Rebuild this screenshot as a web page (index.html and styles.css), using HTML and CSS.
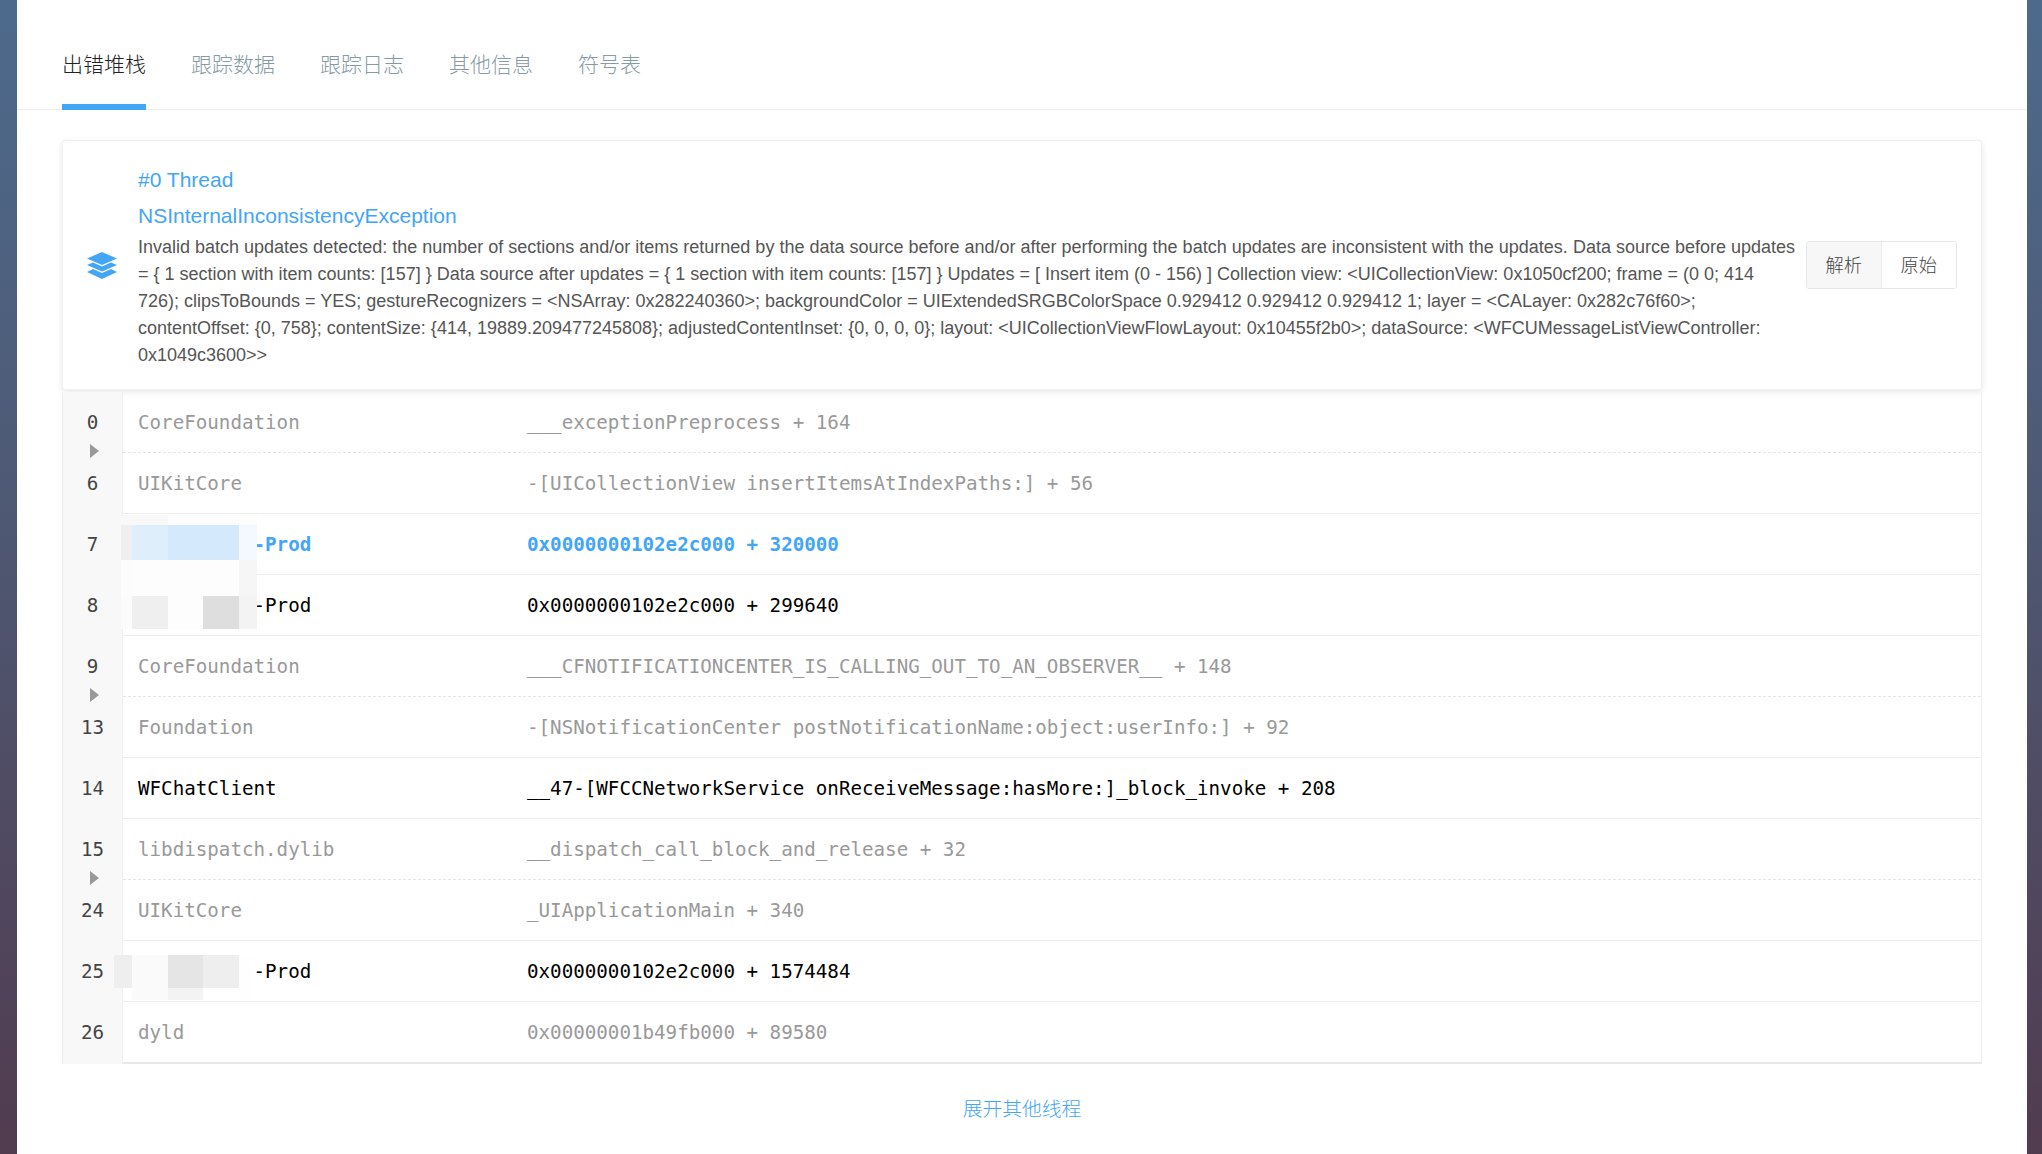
FILE: index.html
```html
<!DOCTYPE html>
<html lang="zh">
<head>
<meta charset="utf-8">
<title>出错堆栈</title>
<link rel="stylesheet" href="styles.css">
</head>
<body>
<main class="panel">
  <nav class="tabs">
    <a class="tab active">出错堆栈</a>
    <a class="tab">跟踪数据</a>
    <a class="tab">跟踪日志</a>
    <a class="tab">其他信息</a>
    <a class="tab">符号表</a>
  </nav>
  <section class="card">
    <svg class="layers" viewBox="0 0 30 27" width="30" height="27"><path d="M15 0L30 6.5L15 13L0 6.5Z"/><path d="M6 10.5L15 14.5L24 10.5L30 13L15 19.5L0 13Z"/><path d="M6 17L15 21L24 17L30 20L15 27L0 20Z"/></svg>
    <div class="summary">
      <div class="title">#0 Thread</div>
      <div class="title">NSInternalInconsistencyException</div>
      <p class="desc">Invalid batch updates detected: the number of sections and/or items returned by the data source before and/or after performing the batch updates are inconsistent with the updates. Data source before updates<br>= { 1 section with item counts: [157] } Data source after updates = { 1 section with item counts: [157] } Updates = [ Insert item (0 - 156) ] Collection view: &lt;UICollectionView: 0x1050cf200; frame = (0 0; 414<br>726); clipsToBounds = YES; gestureRecognizers = &lt;NSArray: 0x282240360&gt;; backgroundColor = UIExtendedSRGBColorSpace 0.929412 0.929412 0.929412 1; layer = &lt;CALayer: 0x282c76f60&gt;;<br>contentOffset: {0, 758}; contentSize: {414, 19889.209477245808}; adjustedContentInset: {0, 0, 0, 0}; layout: &lt;UICollectionViewFlowLayout: 0x10455f2b0&gt;; dataSource: &lt;WFCUMessageListViewController:<br>0x1049c3600&gt;&gt;</p>
    </div>
    <div class="switch">
      <button class="switch-btn on">解析</button>
      <button class="switch-btn">原始</button>
    </div>
  </section>
  <section class="stack">
    <div class="row dashed"><span class="num">0</span><span class="lib">CoreFoundation</span><span class="sym">___exceptionPreprocess + 164</span><i class="fold"></i></div>
    <div class="row"><span class="num">6</span><span class="lib">UIKitCore</span><span class="sym">-[UICollectionView insertItemsAtIndexPaths:] + 56</span></div>
    <div class="row hit">
      <span class="num">7</span><span class="lib"><span class="hidden-name"></span>-Prod</span><span class="sym">0x0000000102e2c000 + 320000</span>
      <svg class="mosaic mosaic-a" width="136" height="114" viewBox="121 515 136 114" shape-rendering="crispEdges">
        <rect x="121" y="515" width="47" height="10" fill="#f8f8f8"/><rect x="168" y="515" width="89" height="10" fill="#fdfdfd"/>
        <rect x="121" y="525" width="11" height="35" fill="#efefef"/><rect x="132" y="525" width="36" height="35" fill="#dfeefb"/><rect x="168" y="525" width="71" height="35" fill="#d4e9fb"/><rect x="239" y="525" width="18" height="35" fill="#f3f9fe"/>
        <rect x="121" y="560" width="11" height="36" fill="#fcfcfc"/><rect x="132" y="560" width="107" height="36" fill="#fdfdfd"/><rect x="239" y="560" width="18" height="36" fill="#f6f6f6"/>
        <rect x="121" y="596" width="11" height="33" fill="#fbfbfb"/><rect x="132" y="596" width="36" height="33" fill="#efefef"/><rect x="168" y="596" width="35" height="33" fill="#fdfdfd"/><rect x="203" y="596" width="36" height="33" fill="#dedede"/><rect x="239" y="596" width="18" height="33" fill="#f3f3f3"/>
      </svg>
    </div>
    <div class="row app"><span class="num">8</span><span class="lib"><span class="hidden-name"></span>-Prod</span><span class="sym">0x0000000102e2c000 + 299640</span></div>
    <div class="row dashed"><span class="num">9</span><span class="lib">CoreFoundation</span><span class="sym">___CFNOTIFICATIONCENTER_IS_CALLING_OUT_TO_AN_OBSERVER__ + 148</span><i class="fold"></i></div>
    <div class="row"><span class="num">13</span><span class="lib">Foundation</span><span class="sym">-[NSNotificationCenter postNotificationName:object:userInfo:] + 92</span></div>
    <div class="row app"><span class="num">14</span><span class="lib">WFChatClient</span><span class="sym">__47-[WFCCNetworkService onReceiveMessage:hasMore:]_block_invoke + 208</span></div>
    <div class="row dashed"><span class="num">15</span><span class="lib">libdispatch.dylib</span><span class="sym">__dispatch_call_block_and_release + 32</span><i class="fold"></i></div>
    <div class="row"><span class="num">24</span><span class="lib">UIKitCore</span><span class="sym">_UIApplicationMain + 340</span></div>
    <div class="row app">
      <span class="num">25</span><span class="lib"><span class="hidden-name"></span>-Prod</span><span class="sym">0x0000000102e2c000 + 1574484</span>
      <svg class="mosaic mosaic-b" width="139" height="45" viewBox="114 954 139 45" shape-rendering="crispEdges">
        <rect x="114" y="954" width="18" height="33" fill="#eeeeee"/><rect x="132" y="954" width="36" height="45" fill="#fafafa"/><rect x="168" y="954" width="35" height="33" fill="#e5e5e5"/><rect x="203" y="954" width="36" height="33" fill="#eeeeee"/><rect x="239" y="954" width="14" height="45" fill="#fefefe"/>
        <rect x="168" y="987" width="35" height="12" fill="#f3f3f3"/><rect x="203" y="987" width="36" height="12" fill="#ffffff"/>
      </svg>
    </div>
    <div class="row"><span class="num">26</span><span class="lib">dyld</span><span class="sym">0x00000001b49fb000 + 89580</span></div>
  </section>
  <a class="more">展开其他线程</a>
</main>
</body>
</html>
```

FILE: styles.css
```css
* { box-sizing: border-box; }

html, body { margin: 0; height: 100%; }

body {
  height: 1154px;
  overflow: hidden;
  background: linear-gradient(180deg, #4d6a8c 0%, #4e5873 45%, #513b4f 100%);
  font-family: "Liberation Sans", "Noto Sans CJK SC", sans-serif;
  color: #555;
}

.panel {
  margin: 0 15px 0 17px;
  height: 1154px;
  background: #fff;
}

.tabs {
  display: flex;
  gap: 45px;
  height: 110px;
  padding-left: 45px;
  border-bottom: 1px solid #eee;
}

.tab {
  height: 110px;
  padding-top: 47px;
  font-family: "Noto Sans CJK SC", sans-serif;
  font-size: 21px;
  font-weight: 300;
  line-height: 32px;
  color: #869aa4;
  border-bottom: 6px solid transparent;
}

.tab.active {
  color: #222;
  border-bottom-color: #42a5f5;
}

.card {
  display: flex;
  align-items: center;
  height: 250px;
  margin: 30px 45px 0;
  padding: 0 24px 0 24px;
  background: #fff;
  border: 1px solid #f0f0f0;
  border-radius: 3px;
  box-shadow: 0 2px 6px rgba(0, 0, 0, .1);
}

.layers {
  flex: none;
  margin-right: 21px;
  fill: #42a5f5;
}

.summary { flex: 1; min-width: 0; }

.title {
  font-size: 21px;
  line-height: 36px;
  color: #42a5f5;
}

.desc {
  margin: 0;
  font-size: 18px;
  line-height: 27px;
  white-space: nowrap;
  color: #555;
}

.switch {
  flex: none;
  display: flex;
  height: 48px;
  border: 1px solid #e6e6e6;
  border-radius: 3px;
  overflow: hidden;
}

.switch-btn {
  width: 74.5px;
  padding: 0 0 2px;
  border: 0;
  background: #fff;
  font-family: "Noto Sans CJK SC", sans-serif;
  font-size: 18.2px;
  font-weight: 300;
  color: #444;
}

.switch-btn.on {
  background: #f7f7f7;
  border-right: 1px solid #eee;
}

.stack {
  margin: 2px 45px 0;
  border-left: 1px solid #eee;
  border-right: 1px solid #f0f0f0;
  border-bottom: 2px solid #e8e8e8;
  font-family: "DejaVu Sans Mono", monospace;
  font-size: 19.2px;
  color: #999;
}

.row {
  position: relative;
  display: grid;
  grid-template-columns: 60px 389px 1fr;
  height: 61px;
  line-height: 62px;
  border-bottom: 1px solid #eee;
  white-space: pre;
}

.stack .row:last-child {
  height: 60px;
  border-bottom: 0;
}

.row.dashed { border-bottom: 1px dashed #e6e6e6; }

.row.app { color: #000; }

.row.hit {
  color: #42a5f5;
  font-weight: 700;
}

.num {
  text-align: center;
  font-weight: 400;
  color: #444;
  background: #f8f8f8;
  border-right: 1px solid #eee;
}

.lib { padding-left: 15px; }

.sym { padding-left: 15px; }

.hidden-name {
  display: inline-block;
  width: 10ch;
}

.fold {
  position: absolute;
  z-index: 1;
  left: 27px;
  top: 52px;
  border-style: solid;
  border-width: 7.5px 0 7.5px 9px;
  border-color: transparent transparent transparent #999;
}

.mosaic {
  position: absolute;
  z-index: 1;
  display: block;
}

.mosaic-a { left: 58px; top: 1px; }

.mosaic-b { left: 51px; top: 14px; }

.more {
  display: block;
  margin-top: 29px;
  text-align: center;
  font-family: "Noto Sans CJK SC", sans-serif;
  font-size: 19.8px;
  font-weight: 300;
  line-height: 30px;
  color: #42a5f5;
}
```
